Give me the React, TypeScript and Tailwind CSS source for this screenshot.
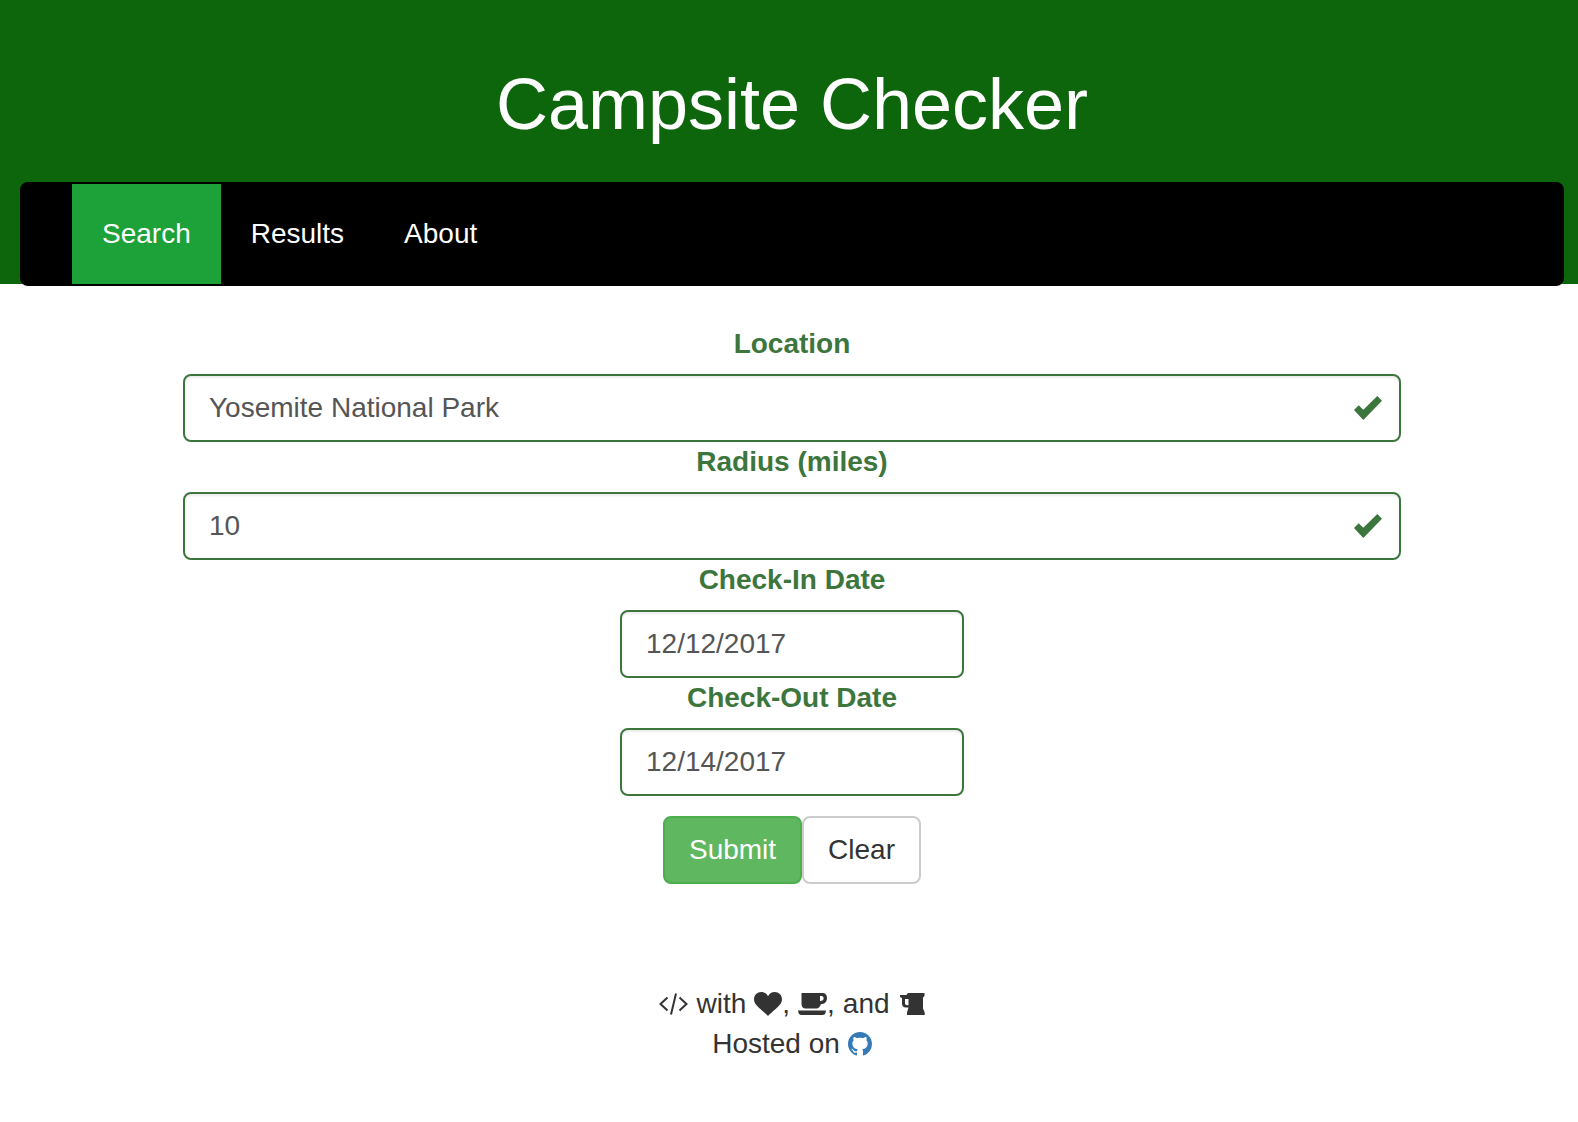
import { useState } from "react";

const tabs = ["Search", "Results", "About"];

function Check() {
  return (
    <svg viewBox="0 0 28 24" className="pointer-events-none absolute top-1/2 right-[19px] h-6 w-7 -translate-y-1/2 fill-[#3c763d]" aria-hidden="true">
      <path d="M0 14L4.700 9.300L9.300 13.700L23.300 0L28 4.700L9.300 24Z" />
    </svg>
  );
}

function Code() {
  return (
    <svg viewBox="0 0 29 24" className="h-6 w-[29px] fill-none stroke-current stroke-2" aria-label="code" role="img">
      <path d="M8.500 5.500L1.500 12L8.500 18.500M20.500 5.500L27.500 12L20.500 18.500M17 1.500L12 22.500" />
    </svg>
  );
}

function Heart() {
  return (
    <svg viewBox="0 0 28 24" className="h-6 w-7 fill-current" aria-label="love" role="img">
      <path d="M14 24C11 20.3 1.8 14.5 .3 9.5C-1 4 2.700 0 7.200 0C10.300 0 12.700 1.600 14 4.200C15.300 1.600 17.700 0 20.800 0C25.300 0 29 4 27.700 9.500C26.200 14.500 17 20.300 14 24Z" />
    </svg>
  );
}

function Coffee() {
  return (
    <svg viewBox="0 0 29 22" className="h-[22px] w-[29px] fill-current" aria-label="coffee" role="img">
      <path fillRule="evenodd" d="M3.500 0H24.500C27.500 0 29 2 29 5C29 8.800 26.800 11 22.800 11.300C22.200 14 20.500 15.500 18.500 15.500H7.500C5 15.500 3.500 13.500 3.500 11ZM22 3V8C24.500 8 25.600 7 25.600 5.200C25.600 3.700 24.800 3 23.500 3Z" />
      <path d="M0 17.500H28C27.700 20.500 26.500 22 24.500 22H3.500C1.500 22 .3 20.500 0 17.500Z" />
    </svg>
  );
}

function Stein() {
  return (
    <svg viewBox="0 0 25 22" className="ml-0.5 h-[22px] w-[25px] fill-current" aria-label="beer" role="img">
      <path fillRule="evenodd" d="M0 2H6.500L8 0H24.500V3L23 4.500V15.500L24.700 19.500V22H7V19.500L8.500 14.500H6C3.500 14.500 2 13 2 10.500V5L0 4ZM5 6V10C5 11.400 5.700 12.200 7 12.200H8.500V6Z" />
    </svg>
  );
}

function GitHub() {
  return (
    <svg viewBox="0 0 16 16" className="h-6 w-6 fill-current" aria-hidden="true">
      <path d="M8 0C3.580 0 0 3.580 0 8c0 3.540 2.290 6.530 5.470 7.590.4.070.55-.17.55-.38 0-.19-.01-.82-.01-1.490-2.010.37-2.530-.49-2.690-.94-.09-.23-.48-.94-.82-1.130-.28-.15-.68-.52-.01-.53.63-.01 1.080.58 1.230.82.72 1.210 1.870.87 2.330.66.07-.52.28-.87.51-1.070-1.780-.2-3.640-.89-3.640-3.950 0-.87.31-1.590.82-2.150-.08-.2-.36-1.020.08-2.120 0 0 .67-.21 2.200.82.64-.18 1.320-.27 2-.27s1.360.09 2 .27c1.530-1.040 2.200-.82 2.200-.82.44 1.100.16 1.920.08 2.120.51.56.82 1.270.82 2.150 0 3.070-1.870 3.750-3.650 3.950.29.25.54.73.54 1.480 0 1.070-.01 1.930-.01 2.200 0 .21.15.46.55.38A8.010 8.010 0 0 0 16 8c0-4.420-3.580-8-8-8Z" />
    </svg>
  );
}

type FieldProps = {
  id: string;
  label: string;
  value: string;
  onChange: (value: string) => void;
  narrow?: boolean;
};

function Field({ id, label, value, onChange, narrow = false }: FieldProps) {
  return (
    <div className="flex w-full flex-col items-center">
      <label htmlFor={id} className="mb-2.5 font-bold text-[#3c763d]">
        {label}
      </label>
      <div className={narrow ? "relative w-full max-w-[344px]" : "relative w-full"}>
        <input
          id={id}
          type="text"
          value={value}
          onChange={(event) => onChange(event.target.value)}
          className="block h-[68px] w-full rounded-lg border-2 border-[#3c763d] bg-white px-6 text-[#555] shadow-[inset_0_2px_2px_rgba(0,0,0,0.075)] outline-none"
        />
        {!narrow && <Check />}
      </div>
    </div>
  );
}

const initial = { location: "Yosemite National Park", radius: "10", checkIn: "12/12/2017", checkOut: "12/14/2017" };
const empty = { location: "", radius: "", checkIn: "", checkOut: "" };

export default function App() {
  const [form, setForm] = useState(initial);
  const set = (key: keyof typeof initial) => (value: string) => setForm({ ...form, [key]: value });

  return (
    <div className="min-h-screen bg-white font-['Liberation_Sans',Arial,sans-serif] text-[28px] leading-10 text-[#333]">
      <header className="h-[284px] bg-[#0e660c] pt-16 pr-3.5 pl-5">
        <h1 className="mb-[38px] text-center text-7xl leading-20 text-white">Campsite Checker</h1>
        <nav className="rounded-lg bg-black py-0.5 pl-[52px]">
          <ul className="flex">
            {tabs.map((tab) => (
              <li key={tab}>
                <a
                  href={`#${tab.toLowerCase()}`}
                  aria-current={tab === "Search" ? "page" : undefined}
                  className="block p-[30px] text-white aria-[current=page]:bg-[#1da139]"
                >
                  {tab}
                </a>
              </li>
            ))}
          </ul>
        </nav>
      </header>

      <main className="pt-10 pr-3.5 pl-5">
        <form className="mx-auto flex max-w-[1218px] flex-col items-center" onSubmit={(event) => event.preventDefault()}>
          <Field id="location" label="Location" value={form.location} onChange={set("location")} />
          <Field id="radius" label="Radius (miles)" value={form.radius} onChange={set("radius")} />
          <Field id="check-in" label="Check-In Date" value={form.checkIn} onChange={set("checkIn")} narrow />
          <Field id="check-out" label="Check-Out Date" value={form.checkOut} onChange={set("checkOut")} narrow />
          <div className="mt-5 flex">
            <button type="submit" className="rounded-lg border-2 border-[#4cae4c] bg-[#5fb760] px-6 py-3 text-white">
              Submit
            </button>
            <button type="button" onClick={() => setForm(empty)} className="rounded-lg border-2 border-[#ccc] bg-white px-6 py-3">
              Clear
            </button>
          </div>
        </form>
      </main>

      <footer className="mt-[100px] pr-3.5 pl-5">
        <p className="flex items-center justify-center gap-2">
          <Code />
          <span>with</span>
          <span className="flex items-center">
            <Heart />,
          </span>
          <span className="flex items-center">
            <Coffee />,
          </span>
          <span>and</span>
          <Stein />
        </p>
        <p className="flex items-center justify-center gap-2">
          <span>Hosted on</span>
          <a href="https://github.com" aria-label="GitHub" className="text-[#337ab7]">
            <GitHub />
          </a>
        </p>
      </footer>
    </div>
  );
}
